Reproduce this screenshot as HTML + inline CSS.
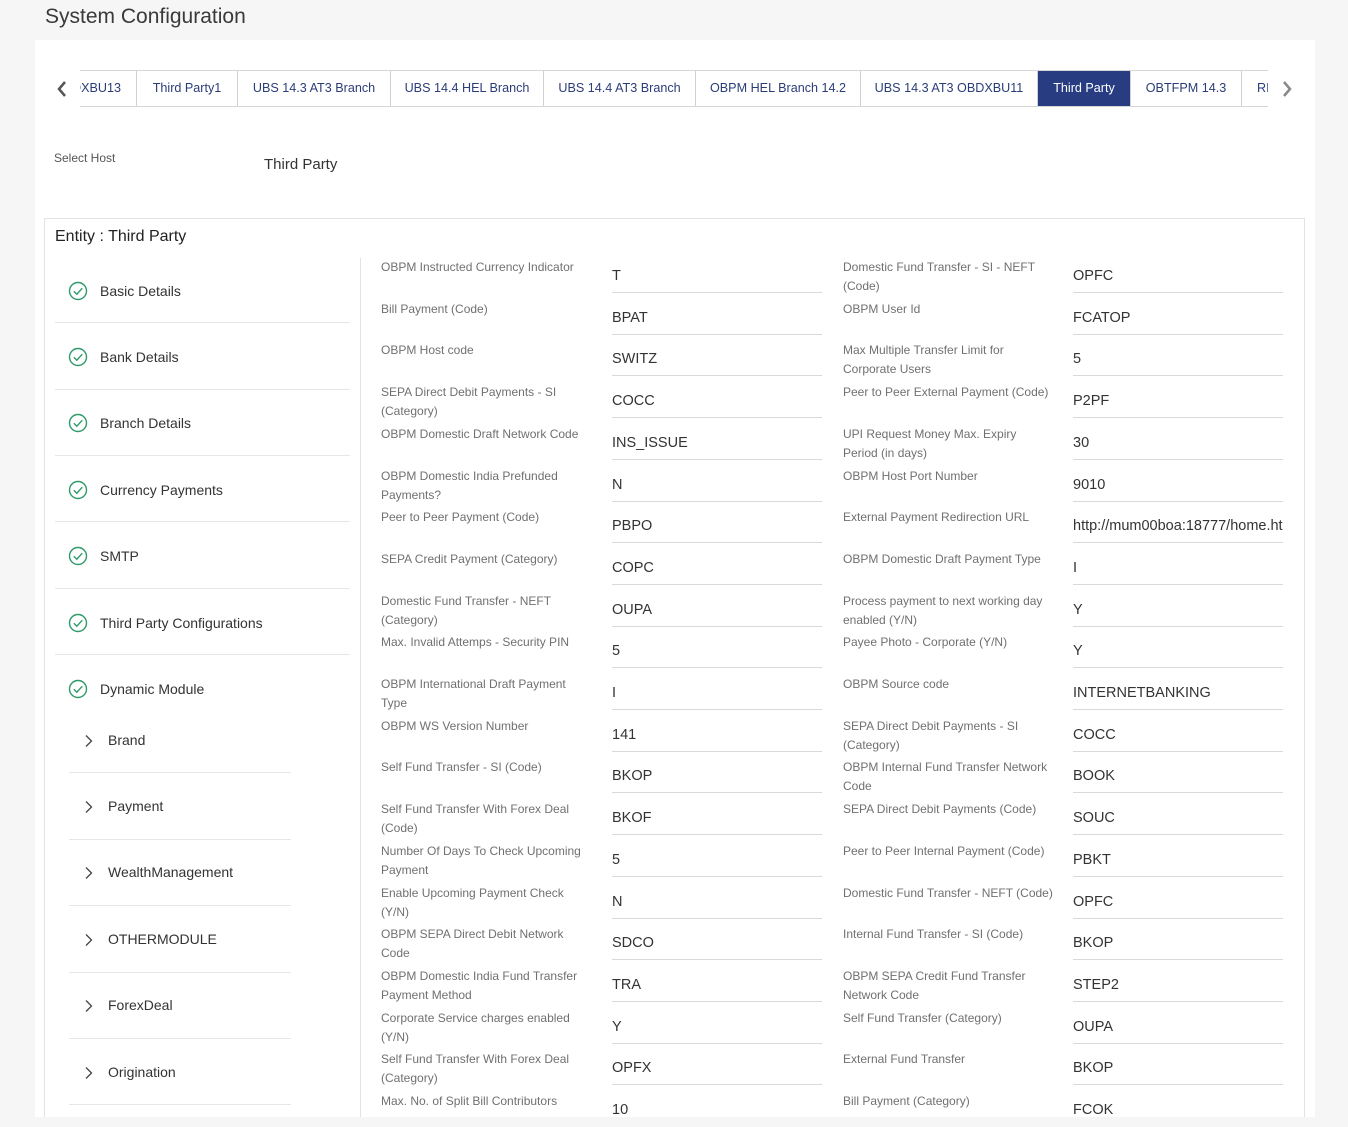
<!DOCTYPE html>
<html><head><meta charset="utf-8">
<style>
*{box-sizing:border-box;margin:0;padding:0}
body{width:1348px;height:1127px;overflow:hidden;background:#f6f6f6;font-family:"Liberation Sans",sans-serif;position:relative}
.abs{position:absolute}
h1{position:absolute;left:45px;top:5px;font-size:21px;font-weight:normal;color:#3a3a3a;letter-spacing:0}
.panel{position:absolute;left:35px;top:40px;width:1280px;height:1077px;background:#fff}
.tabs{position:absolute;left:80px;top:70px;width:1188px;height:37px;overflow:hidden;border-top:1px solid #d6d6d6;border-bottom:1px solid #d6d6d6}
.tab{position:absolute;top:0;height:35px;border-right:1px solid #d0d0d0;font-size:12.6px;color:#2b3d78;line-height:35px;text-align:center;white-space:nowrap;overflow:hidden}
.tab.on{background:#283c82;color:#fff}
.entity{position:absolute;left:44px;top:218px;width:1261px;height:899px;border:1px solid #e3e3e3;border-bottom:none}
.lbl{font-size:12px;color:#707070;line-height:19px}
.val{font-size:14.5px;color:#333}
.ul{position:absolute;height:1px;background:#d9d9d9}
.nav{position:absolute;font-size:14px;color:#333}
.sep{position:absolute;height:1px;background:#e6e6e6}
</style></head><body>
<h1>System Configuration</h1>
<div class="panel"></div>
<svg class="abs" style="left:55px;top:80px" width="14" height="18" viewBox="0 0 14 18"><path d="M10 2 L4 9 L10 16" fill="none" stroke="#555" stroke-width="2.5"/></svg>
<svg class="abs" style="left:1280px;top:80px" width="14" height="18" viewBox="0 0 14 18"><path d="M4 2 L10 9 L4 16" fill="none" stroke="#888" stroke-width="2.5"/></svg>
<div class="tabs">
<div class="tab" style="left:0;width:57px"><span style="position:absolute;right:15px;top:0">OBDXBU13</span></div>
<div class="tab" style="left:57px;width:101px">Third Party1</div>
<div class="tab" style="left:158px;width:153px">UBS 14.3 AT3 Branch</div>
<div class="tab" style="left:311px;width:153px">UBS 14.4 HEL Branch</div>
<div class="tab" style="left:464px;width:152px">UBS 14.4 AT3 Branch</div>
<div class="tab" style="left:616px;width:165px">OBPM HEL Branch 14.2</div>
<div class="tab" style="left:781px;width:177px">UBS 14.3 AT3 OBDXBU11</div>
<div class="tab on" style="left:958px;width:93px">Third Party</div>
<div class="tab" style="left:1051px;width:111px">OBTFPM 14.3</div>
<div class="tab" style="left:1162px;width:60px;text-align:left;padding-left:15px;border:none">RI</div>
</div>
<div class="abs lbl" style="left:54px;top:149px;color:#555">Select Host</div>
<div class="abs" style="left:264px;top:156px;font-size:15px;color:#333">Third Party</div>
<div class="entity"></div>
<div class="abs" style="left:55px;top:228px;font-size:16px;color:#222">Entity : Third Party</div>
<div class="abs" style="left:360px;top:258px;width:1px;height:859px;background:#e3e3e3"></div>

<svg width="0" height="0" style="position:absolute"><defs><symbol id="ck" viewBox="0 0 20 20"><circle cx="10" cy="10" r="8.5" fill="none" stroke="#2e9a6a" stroke-width="1.4"/><path d="M5.8 10.3 L8.8 13.2 L14.3 7.2" fill="none" stroke="#2e9a6a" stroke-width="1.4"/></symbol><symbol id="ch" viewBox="0 0 10 14"><path d="M2 1.5 L7.5 7 L2 12.5" fill="none" stroke="#444" stroke-width="1.3"/></symbol></defs></svg>

<svg class="abs" style="left:68px;top:281px" width="20" height="20"><use href="#ck"/></svg><div class="nav" style="left:100px;top:283px">Basic Details</div><div class="sep" style="left:55px;top:322px;width:295px"></div>
<svg class="abs" style="left:68px;top:347px" width="20" height="20"><use href="#ck"/></svg><div class="nav" style="left:100px;top:349px">Bank Details</div><div class="sep" style="left:55px;top:389px;width:295px"></div>
<svg class="abs" style="left:68px;top:413px" width="20" height="20"><use href="#ck"/></svg><div class="nav" style="left:100px;top:415px">Branch Details</div><div class="sep" style="left:55px;top:455px;width:295px"></div>
<svg class="abs" style="left:68px;top:480px" width="20" height="20"><use href="#ck"/></svg><div class="nav" style="left:100px;top:482px">Currency Payments</div><div class="sep" style="left:55px;top:521px;width:295px"></div>
<svg class="abs" style="left:68px;top:546px" width="20" height="20"><use href="#ck"/></svg><div class="nav" style="left:100px;top:548px">SMTP</div><div class="sep" style="left:55px;top:588px;width:295px"></div>
<svg class="abs" style="left:68px;top:613px" width="20" height="20"><use href="#ck"/></svg><div class="nav" style="left:100px;top:615px">Third Party Configurations</div><div class="sep" style="left:55px;top:654px;width:295px"></div>
<svg class="abs" style="left:68px;top:679px" width="20" height="20"><use href="#ck"/></svg><div class="nav" style="left:100px;top:681px">Dynamic Module</div>

<svg class="abs" style="left:84px;top:734px" width="10" height="14"><use href="#ch"/></svg><div class="nav" style="left:108px;top:732px">Brand</div><div class="sep" style="left:69px;top:772px;width:222px"></div>
<svg class="abs" style="left:84px;top:800px" width="10" height="14"><use href="#ch"/></svg><div class="nav" style="left:108px;top:798px">Payment</div><div class="sep" style="left:69px;top:839px;width:222px"></div>
<svg class="abs" style="left:84px;top:866px" width="10" height="14"><use href="#ch"/></svg><div class="nav" style="left:108px;top:864px">WealthManagement</div><div class="sep" style="left:69px;top:905px;width:222px"></div>
<svg class="abs" style="left:84px;top:933px" width="10" height="14"><use href="#ch"/></svg><div class="nav" style="left:108px;top:931px">OTHERMODULE</div><div class="sep" style="left:69px;top:972px;width:222px"></div>
<svg class="abs" style="left:84px;top:999px" width="10" height="14"><use href="#ch"/></svg><div class="nav" style="left:108px;top:997px">ForexDeal</div><div class="sep" style="left:69px;top:1038px;width:222px"></div>
<svg class="abs" style="left:84px;top:1066px" width="10" height="14"><use href="#ch"/></svg><div class="nav" style="left:108px;top:1064px">Origination</div><div class="sep" style="left:69px;top:1104px;width:222px"></div>

<div id="rows"></div>
<script>
var L=[["OBPM Instructed Currency Indicator","T"],["Bill Payment (Code)","BPAT"],["OBPM Host code","SWITZ"],["SEPA Direct Debit Payments - SI (Category)","COCC"],["OBPM Domestic Draft Network Code","INS_ISSUE"],["OBPM Domestic India Prefunded Payments?","N"],["Peer to Peer Payment (Code)","PBPO"],["SEPA Credit Payment (Category)","COPC"],["Domestic Fund Transfer - NEFT (Category)","OUPA"],["Max. Invalid Attemps - Security PIN","5"],["OBPM International Draft Payment Type","I"],["OBPM WS Version Number","141"],["Self Fund Transfer - SI (Code)","BKOP"],["Self Fund Transfer With Forex Deal (Code)","BKOF"],["Number Of Days To Check Upcoming Payment","5"],["Enable Upcoming Payment Check (Y/N)","N"],["OBPM SEPA Direct Debit Network Code","SDCO"],["OBPM Domestic India Fund Transfer Payment Method","TRA"],["Corporate Service charges enabled (Y/N)","Y"],["Self Fund Transfer With Forex Deal (Category)","OPFX"],["Max. No. of Split Bill Contributors","10"]];
var R=[["Domestic Fund Transfer - SI - NEFT (Code)","OPFC"],["OBPM User Id","FCATOP"],["Max Multiple Transfer Limit for Corporate Users","5"],["Peer to Peer External Payment (Code)","P2PF"],["UPI Request Money Max. Expiry Period (in days)","30"],["OBPM Host Port Number","9010"],["External Payment Redirection URL","http://mum00boa:18777/home.html"],["OBPM Domestic Draft Payment Type","I"],["Process payment to next working day enabled (Y/N)","Y"],["Payee Photo - Corporate (Y/N)","Y"],["OBPM Source code","INTERNETBANKING"],["SEPA Direct Debit Payments - SI (Category)","COCC"],["OBPM Internal Fund Transfer Network Code","BOOK"],["SEPA Direct Debit Payments (Code)","SOUC"],["Peer to Peer Internal Payment (Code)","PBKT"],["Domestic Fund Transfer - NEFT (Code)","OPFC"],["Internal Fund Transfer - SI (Code)","BKOP"],["OBPM SEPA Credit Fund Transfer Network Code","STEP2"],["Self Fund Transfer (Category)","OUPA"],["External Fund Transfer","BKOP"],["Bill Payment (Category)","FCOK"]];
var h="";
function col(a,lx,vx){for(var i=0;i<a.length;i++){var t=258+i*41.7;
h+='<div class="abs lbl" style="left:'+lx+'px;top:'+(t)+'px;width:210px">'+a[i][0]+'</div>';
h+='<div class="abs val" style="left:'+vx+'px;top:'+(t+8)+'px;width:210px;overflow:hidden;white-space:nowrap;line-height:20px">'+a[i][1]+'</div>';
if(i<a.length-1)h+='<div class="ul" style="left:'+vx+'px;top:'+(t+34)+'px;width:210px"></div>';}}
col(L,381,612);col(R,843,1073);
document.getElementById("rows").innerHTML=h;
</script>
</body></html>
